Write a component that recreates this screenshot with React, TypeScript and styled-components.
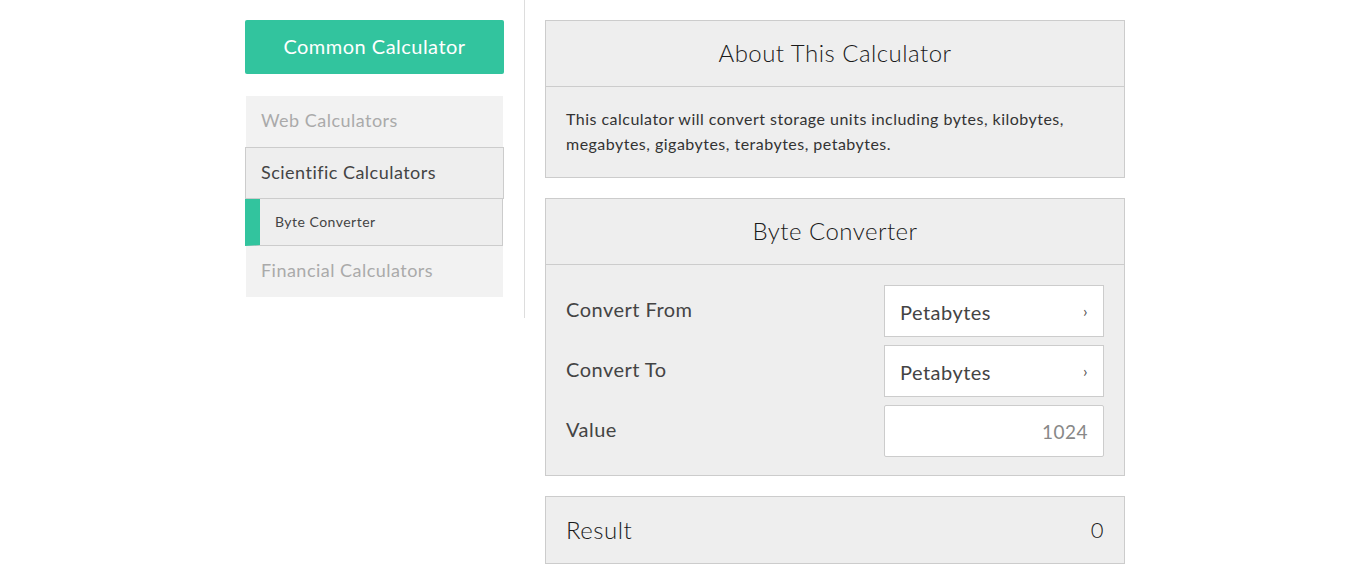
import React from 'react'
import styled, { createGlobalStyle } from 'styled-components'

const GlobalStyle = createGlobalStyle`
  body {
    margin: 0;
    background: #fff;
    font-family: Lato, "Liberation Sans", sans-serif;
    letter-spacing: 0.03em;
    color: #333;
  }
`

const menu = [
  { name: 'Web Calculators', state: 'muted' },
  { name: 'Scientific Calculators', state: 'open' },
  { name: 'Byte Converter', state: 'sub' },
  { name: 'Financial Calculators', state: 'muted' },
]

const rows = [
  { label: 'Convert From', value: 'Petabytes', select: true },
  { label: 'Convert To', value: 'Petabytes', select: true },
  { label: 'Value', value: '1024', select: false },
]

const App = () => {
  return (
    <>
      <GlobalStyle />
      <Page>
        <Sidebar>
          <MainButton>Common Calculator</MainButton>
          <Menu>
            {menu.map((item) =>
              item.state === 'sub' ? (
                <SubItem key={item.name}>
                  <span>{item.name}</span>
                </SubItem>
              ) : (
                <MenuItem key={item.name} $open={item.state === 'open'}>
                  {item.name}
                </MenuItem>
              )
            )}
          </Menu>
        </Sidebar>
        <Content>
          <Card>
            <CardHeader>About This Calculator</CardHeader>
            <AboutText>
              This calculator will convert storage units including bytes, kilobytes,
              megabytes, gigabytes, terabytes, petabytes.
            </AboutText>
          </Card>
          <Card>
            <CardHeader>Byte Converter</CardHeader>
            <Form>
              {rows.map((row) => (
                <Row key={row.label}>
                  <Label>{row.label}</Label>
                  {row.select ? (
                    <Select>
                      <span>{row.value}</span>
                      <Chevron>›</Chevron>
                    </Select>
                  ) : (
                    <Input>{row.value}</Input>
                  )}
                </Row>
              ))}
            </Form>
          </Card>
          <ResultCard>
            <span>Result</span>
            <ResultValue>0</ResultValue>
          </ResultCard>
        </Content>
      </Page>
    </>
  )
}

export default App

const Page = styled.div`
  width: 880px;
  margin: 0 auto;
  padding-left: 20px;
  display: flex;
  align-items: flex-start;
`

const Sidebar = styled.aside`
  width: 259px;
  padding: 20px 20px 21px 0;
  border-right: 1px solid #ddd;
  flex-shrink: 0;
`

const MainButton = styled.div`
  height: 54px;
  padding-bottom: 2px;
  box-sizing: border-box;
  background: #32c49e;
  border-radius: 2px;
  color: #fff;
  font-size: 20px;
  display: flex;
  align-items: center;
  justify-content: center;
`

const Menu = styled.div`
  margin-top: 22px;
  display: flex;
  flex-direction: column;
`

const MenuItem = styled.div<{ $open?: boolean }>`
  height: ${(p) => (p.$open ? '52px' : '51px')};
  box-sizing: border-box;
  margin: 0 1px;
  padding: 0 0 3px 15px;
  display: flex;
  align-items: center;
  font-size: 18px;
  color: #aaa;
  background: #f2f2f2;

  ${(p) =>
    p.$open &&
    `
    margin: 0;
    color: #444;
    background: #eee;
    border: 1px solid #ccc;
  `}
`

const SubItem = styled.div`
  height: 46px;
  margin-right: 1px;
  display: flex;
  align-items: center;
  font-size: 14px;
  color: #444;
  background: #eee;
  border-left: 15px solid #32c49e;
  border-right: 1px solid #ccc;
  border-bottom: 1px solid #ccc;

  span {
    padding-left: 15px;
    margin-top: -2px;
  }
`

const Content = styled.main`
  width: 580px;
  margin-left: 20px;
  padding-top: 20px;
  display: flex;
  flex-direction: column;
  gap: 20px;
`

const Card = styled.section`
  background: #eee;
  border: 1px solid #ccc;
`

const CardHeader = styled.h2`
  margin: 0;
  height: 63px;
  padding-bottom: 2px;
  display: flex;
  align-items: center;
  justify-content: center;
  font-size: 24px;
  font-weight: 300;
  color: #1a1a1a;
  border-bottom: 1px solid #ccc;
`

const AboutText = styled.p`
  margin: 0;
  padding: 19px 20px 21px;
  font-size: 16px;
  line-height: 25px;
  color: #333;
`

const Form = styled.div`
  padding: 20px 20px 18px;
  display: flex;
  flex-direction: column;
  gap: 8px;
`

const Row = styled.div`
  display: flex;
  align-items: center;
  justify-content: space-between;
`

const Label = styled.div`
  font-size: 20px;
  color: #444;
  margin-top: -4px;
`

const Field = styled.div`
  height: 50px;
  background: #fff;
  border: 1px solid #ccc;
  display: flex;
  align-items: center;
  padding: 0 15px;
  box-sizing: content-box;
  width: 188px;
  font-size: 20px;
`

const Select = styled(Field)`
  justify-content: space-between;
  color: #444;
  padding-top: 2px;
  height: 48px;
`

const Chevron = styled.span`
  font-size: 16px;
  color: #555;
  margin-top: -4px;
`

const Input = styled(Field)`
  justify-content: flex-end;
  color: #888;
  font-size: 19px;
  border-radius: 2px;
`

const ResultCard = styled(Card)`
  height: 64px;
  padding: 0 20px 2px;
  display: flex;
  align-items: center;
  justify-content: space-between;
  font-size: 24px;
  font-weight: 300;
  color: #1a1a1a;
`

const ResultValue = styled.span`
  font-size: 22px;
`
